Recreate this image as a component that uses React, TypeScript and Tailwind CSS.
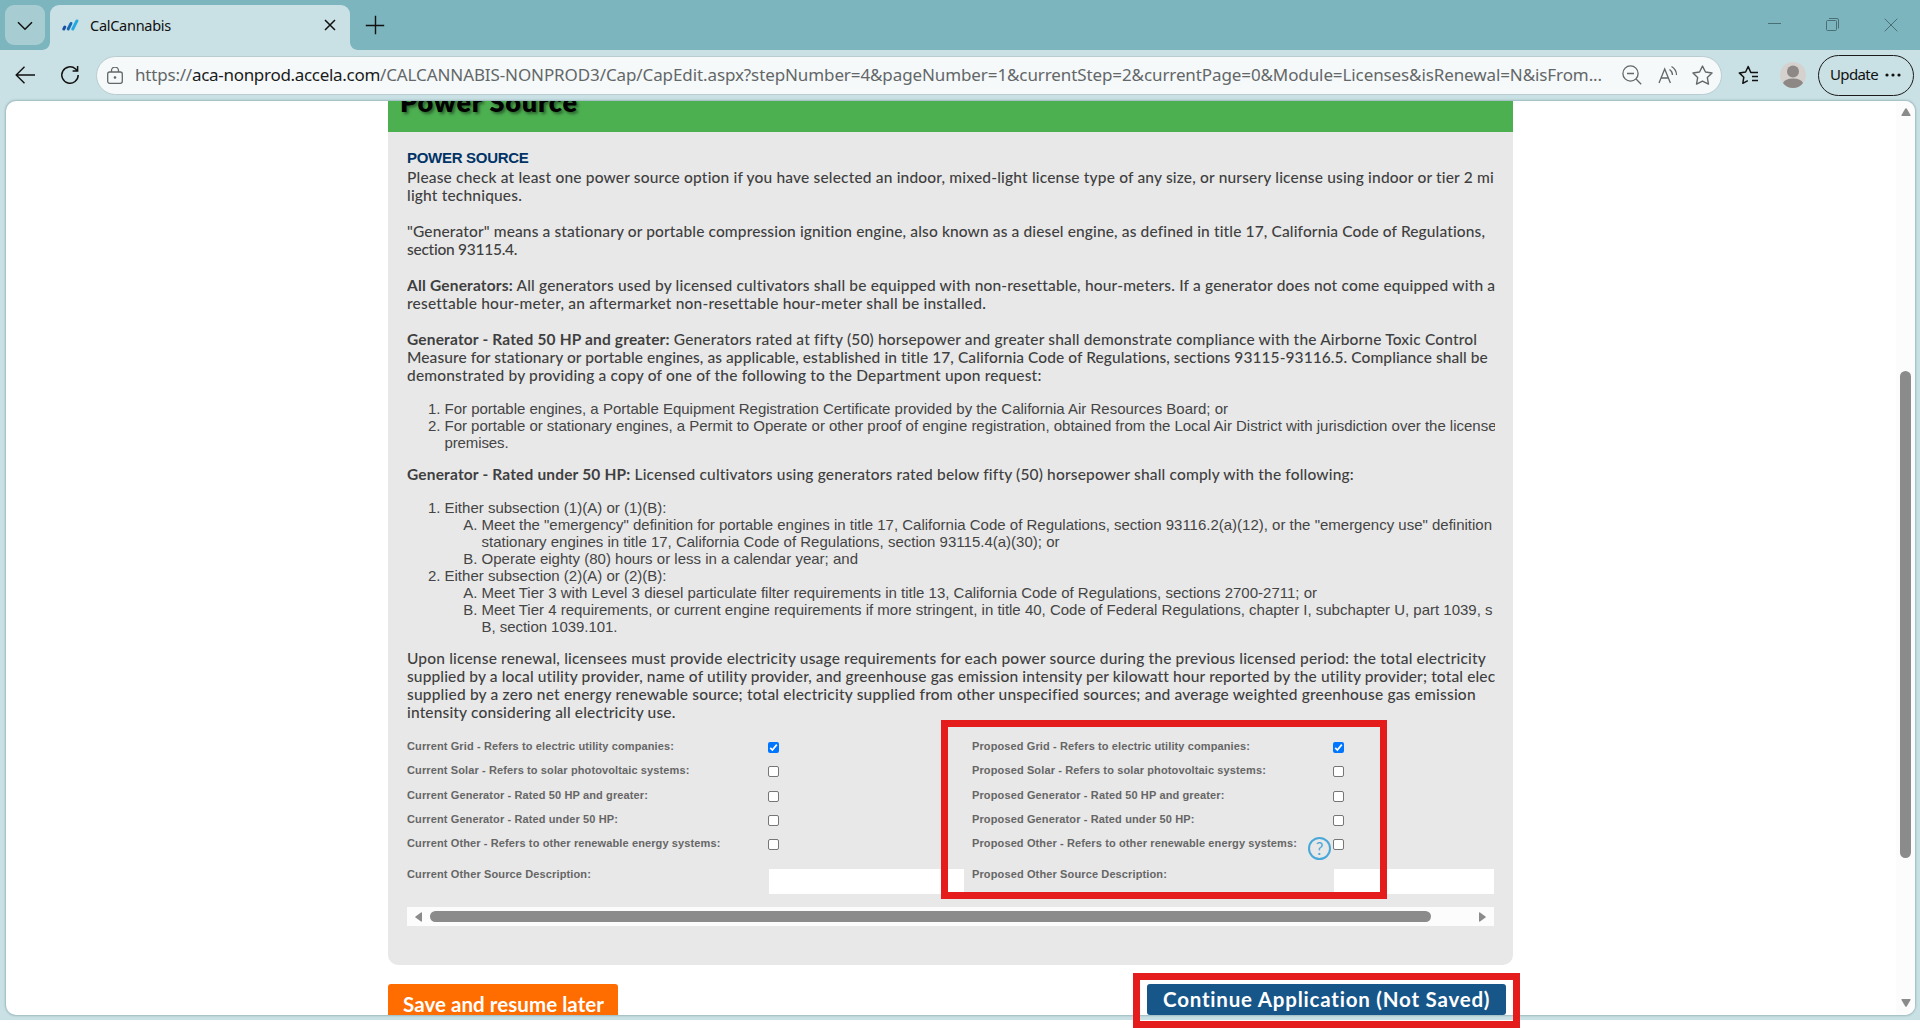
import React, { useLayoutEffect, useRef } from 'react';

// Sets a single line of copy to a fixed measure by adjusting its tracking
const Fit = ({ w, className = '', children }: { w: number; className?: string; children: React.ReactNode }) => {
  const ref = useRef<HTMLSpanElement>(null);

  useLayoutEffect(() => {
    const el = ref.current;
    if (!el) return;
    el.style.letterSpacing = '0px';
    const natural = el.getBoundingClientRect().width;
    const count = (el.textContent || '').length;
    el.style.letterSpacing = `${(w - natural) / count}px`;
  }, [w]);

  return (
    <span ref={ref} className={`inline-block whitespace-pre ${className}`}>
      {children}
    </span>
  );
};

const Line = ({ w, children }: { w: number; children: React.ReactNode }) => (
  <div className="h-[18px] whitespace-nowrap">
    <Fit w={w}>{children}</Fit>
  </div>
);

const Item = ({ mark, w, sub, children }: { mark?: string; w: number; sub?: boolean; children: React.ReactNode }) => (
  <div className={`flex h-[17px] whitespace-nowrap ${sub ? 'pl-[37px]' : ''}`}>
    <span className="w-[37.5px] shrink-0 pr-[4px] text-right">{mark}</span>
    <Fit w={w}>{children}</Fit>
  </div>
);

const Check = ({ checked }: { checked?: boolean }) =>
  checked ? (
    <span className="mt-[4px] flex h-[11px] w-[11px] items-center justify-center rounded-[2px] bg-[#0075ff]">
      <svg viewBox="0 0 11 11" className="h-[11px] w-[11px]" fill="none" stroke="#fff" strokeWidth="1.7">
        <path d="M2.2 5.8 4.4 8 8.8 2.6" />
      </svg>
    </span>
  ) : (
    <span className="mt-[4px] block h-[11px] w-[11px] rounded-[2px] border border-[#767676] bg-white" />
  );

const rows = [
  { height: 'h-[24px]', text: 'Grid - Refers to electric utility companies:', a: 267, b: 278, checked: true },
  { height: 'h-[24.5px]', text: 'Solar - Refers to solar photovoltaic systems:', a: 282.5, b: 294 },
  { height: 'h-[24.5px]', text: 'Generator - Rated 50 HP and greater:', a: 241, b: 252.5 },
  { height: 'h-[24px]', text: 'Generator - Rated under 50 HP:', a: 211, b: 222.5 },
  { height: 'h-[31px]', text: 'Other - Refers to other renewable energy systems:', a: 313.5, b: 325, help: true },
];

const star = 'M10 1.8 12.6 7l5.7.8-4.1 4 1 5.7L10 14.8l-5.2 2.7 1-5.7-4.1-4L7.4 7z';

const TabBar = () => (
  <div className="flex h-[50px] items-start bg-[#7db5be] pt-[5px]">
    <div className="ml-[5px] flex h-[40px] w-[40px] items-center justify-center rounded-[9px] bg-[#a7cdd3]">
      <svg viewBox="0 0 16 10" className="mt-[2px] h-[10px] w-[16px]" fill="none" stroke="#111" strokeWidth="1.5">
        <path d="M1 1.2 8 8.3l7-7.1" />
      </svg>
    </div>
    <div className="relative ml-[5px] flex h-[45px] w-[300px] items-start rounded-t-[9px] bg-[#c9e0e4]">
      <svg viewBox="0 0 8 8" className="absolute -left-[8px] bottom-0 h-[8px] w-[8px]" fill="#c9e0e4">
        <path d="M8 0v8H0c4.4 0 8-3.6 8-8z" />
      </svg>
      <svg viewBox="0 0 8 8" className="absolute -right-[8px] bottom-0 h-[8px] w-[8px]" fill="#c9e0e4">
        <path d="M0 0v8h8C3.6 8 0 4.4 0 0z" />
      </svg>
      <svg viewBox="0 0 17 12" className="ml-[12px] mt-[14px] h-[12px] w-[17px]" fill="none" strokeWidth="2.9" strokeLinecap="round">
        <path d="M1.8 10 2.8 8" stroke="#1b50a0" />
        <path d="M6.2 10 9 4.4" stroke="#1668b8" />
        <path d="M10.8 10 14.9 1.9" stroke="#22a9e0" />
      </svg>
      <span className="ml-[11px] mt-[10px] text-[14.5px] leading-[20px] text-[#111]">
        <Fit w={81}>CalCannabis</Fit>
      </span>
      <svg viewBox="0 0 12 12" className="ml-auto mr-[14px] mt-[14px] h-[12px] w-[12px]" fill="none" stroke="#111" strokeWidth="1.5">
        <path d="m1 1 10 10M11 1 1 11" />
      </svg>
    </div>
    <svg viewBox="0 0 20 20" className="ml-[15px] mt-[10px] h-[20px] w-[20px]" fill="none" stroke="#111" strokeWidth="1.4">
      <path d="M10.5.8v18.4M.8 10.5h18.4" />
    </svg>
    <div className="ml-auto mr-[22px] mt-[12px] flex items-start text-[#4a6f76]">
      <svg viewBox="0 0 13 14" className="mr-[45px] h-[14px] w-[13px]" fill="none" stroke="currentColor">
        <path d="M0 6.5h13" />
      </svg>
      <svg viewBox="0 0 14 14" className="mr-[44px] h-[14px] w-[14px]" fill="none" stroke="currentColor">
        <rect x=".5" y="3.5" width="10" height="10" rx="1" />
        <path d="M3 1.5h8q1.500 0 1.5 1.500v8.5" />
      </svg>
      <svg viewBox="0 0 14 14" className="mt-[1px] h-[14px] w-[14px]" fill="none" stroke="currentColor">
        <path d="m.7.7 12.600 12.600M13.300.7.7 13.300" />
      </svg>
    </div>
  </div>
);

const AddressBar = () => (
  <div className="flex h-[50px] items-center">
    <svg viewBox="0 0 20 18" className="ml-[15px] h-[18px] w-[20px]" fill="none" stroke="#111" strokeWidth="1.4">
      <path d="M9.500.8 1.200 9l8.300 8.200M1.200 9H20" />
    </svg>
    <svg viewBox="0 0 20 20" className="ml-[25px] h-[20px] w-[20px]" fill="none" stroke="#111" strokeWidth="1.5">
      <path d="M18.200 10A8.200 8.200 0 1 1 15.600 4L17.400 5.800M17.600 1v5h-5" />
    </svg>
    <div className="ml-[16px] flex h-[39px] w-[1626px] items-center rounded-full border border-[#b9cdd0] bg-[#f5f9fa] text-[#636768]">
      <svg viewBox="0 0 16 17" className="ml-[10px] h-[17px] w-[16px]" fill="none" stroke="currentColor" strokeWidth="1.3">
        <rect x=".7" y="5" width="14.6" height="11.3" rx="2" />
        <path d="M4.500 5V3.600a3.500 3.500 0 0 1 7 0V5" />
        <circle cx="8" cy="10.5" r=".7" fill="currentColor" />
      </svg>
      <div className="ml-[12px] w-[1490px] text-[17px] leading-[22px]">
        <Fit w={57}>https://</Fit>
        <Fit w={188} className="text-[#1b1b1b]">aca-nonprod.accela.com</Fit>
        <Fit w={1222}>
          /CALCANNABIS-NONPROD3/Cap/CapEdit.aspx?stepNumber=4&amp;pageNumber=1&amp;currentStep=2&amp;currentPage=0&amp;Module=Licenses&amp;isRenewal=N&amp;isFrom...
        </Fit>
      </div>
      <svg viewBox="0 0 20 20" className="-ml-[3px] h-[20px] w-[20px]" fill="none" stroke="currentColor" strokeWidth="1.3">
        <circle cx="8.5" cy="8.5" r="7.6" />
        <path d="m14 14 5.200 5.200M5 8.500h7" />
      </svg>
      <svg viewBox="0 0 20 20" className="ml-[16px] h-[20px] w-[20px]" fill="none" stroke="currentColor" strokeWidth="1.3">
        <path d="M1 18 6.700 4 12.400 18M3 13h7.400M11.500 4.500q3 2 3 5.500M13.500 1.500q5 3 5 8.500" />
      </svg>
      <svg viewBox="0 0 20 20" className="ml-[13px] h-[23px] w-[23px]" fill="none" stroke="currentColor" strokeWidth="1.2" strokeLinejoin="round">
        <path d={star} />
      </svg>
    </div>
    <svg viewBox="0 0 21 20" className="ml-[16px] h-[20px] w-[21px]" fill="none" stroke="#111" strokeWidth="1.5" strokeLinejoin="round">
      <path d="M20 7.500h-7.200L10.200 1.500 7.600 7l-6.300.9 4.500 4.300-1 6.100 5-2.600M14 11.500h6M14 15.500h6" />
    </svg>
    <svg viewBox="0 0 26 26" className="ml-[21px] h-[26px] w-[26px]">
      <circle cx="13" cy="13" r="13" fill="#d5d1ce" />
      <circle cx="13" cy="9.5" r="6" fill="#8d8885" />
      <path d="M3 21q2-4.500 10-4.500T23 21q-3.500 5-10 5T3 21z" fill="#8d8885" />
    </svg>
    <div className="ml-[12px] flex h-[41px] w-[96px] items-center rounded-full border-[1.5px] border-[#1a1a1a] pl-[11px] text-[15px] leading-[20px] text-[#111]">
      <Fit w={48} className="mb-[2px]">Update</Fit>
      <svg viewBox="0 0 16 4" className="ml-[7px] h-[4px] w-[16px]" fill="#111">
        <circle cx="2" cy="2" r="1.6" />
        <circle cx="8" cy="2" r="1.6" />
        <circle cx="14" cy="2" r="1.6" />
      </svg>
    </div>
  </div>
);

const PowerSource = () => (
  <div className="h-[864px] w-[1125px] overflow-hidden rounded-b-[10px] bg-[#e8e8e8]">
    <div className="flex h-[31px] items-start overflow-hidden bg-[#4caf50] pl-[12px] font-['Lato'] text-[27px] font-extrabold leading-[32px] text-black">
      <Fit w={178} className="-mt-[15px] [text-shadow:2px_2px_3px_rgba(0,0,0,0.45)]">Power Source</Fit>
    </div>

    <div className="ml-[19px] w-[1088px] overflow-hidden pt-[17px] font-['Lato'] text-[15.5px] font-medium leading-[18px] text-[#3f3f3f]">
      <div className="h-[19px] font-['Liberation_Sans'] text-[15px] font-bold text-[#003366]">
        <Fit w={121.5}>POWER SOURCE</Fit>
      </div>
      <Line w={1087.5}>Please check at least one power source option if you have selected an indoor, mixed-light license type of any size, or nursery license using indoor or tier 2 mi</Line>
      <Line w={115}>light techniques.</Line>
      <div className="mt-[18px]">
        <Line w={1079}>"Generator" means a stationary or portable compression ignition engine, also known as a diesel engine, as defined in title 17, California Code of Regulations,</Line>
        <Line w={110.5}>section 93115.4.</Line>
      </div>
      <div className="mt-[18px]">
        <Line w={1088}>
          <b className="font-bold">All Generators:</b> All generators used by licensed cultivators shall be equipped with non-resettable, hour-meters. If a generator does not come equipped with a
        </Line>
        <Line w={577.5}>resettable hour-meter, an aftermarket non-resettable hour-meter shall be installed.</Line>
      </div>
      <div className="mt-[18px]">
        <Line w={1069.5}>
          <b className="font-bold">Generator - Rated 50 HP and greater:</b> Generators rated at fifty (50) horsepower and greater shall demonstrate compliance with the Airborne Toxic Control
        </Line>
        <Line w={1082}>Measure for stationary or portable engines, as applicable, established in title 17, California Code of Regulations, sections 93115-93116.5. Compliance shall be</Line>
        <Line w={634.5}>demonstrated by providing a copy of one of the following to the Department upon request:</Line>
      </div>

      <div className="mt-[16px] font-['Liberation_Sans'] text-[15px] font-normal leading-[17px] text-[#444]">
        <Item mark="1." w={783.5}>For portable engines, a Portable Equipment Registration Certificate provided by the California Air Resources Board; or</Item>
        <Item mark="2." w={1052}>For portable or stationary engines, a Permit to Operate or other proof of engine registration, obtained from the Local Air District with jurisdiction over the license</Item>
        <Item w={64}>premises.</Item>
      </div>

      <div className="mt-[14px]">
        <Line w={946.5}>
          <b className="font-bold">Generator - Rated under 50 HP:</b> Licensed cultivators using generators rated below fifty (50) horsepower shall comply with the following:
        </Line>
      </div>

      <div className="mt-[16px] font-['Liberation_Sans'] text-[15px] font-normal leading-[17px] text-[#444]">
        <Item mark="1." w={222}>Either subsection (1)(A) or (1)(B):</Item>
        <Item sub mark="A." w={1010.5}>Meet the "emergency" definition for portable engines in title 17, California Code of Regulations, section 93116.2(a)(12), or the "emergency use" definition</Item>
        <Item sub w={578}>stationary engines in title 17, California Code of Regulations, section 93115.4(a)(30); or</Item>
        <Item sub mark="B." w={376.5}>Operate eighty (80) hours or less in a calendar year; and</Item>
        <Item mark="2." w={222}>Either subsection (2)(A) or (2)(B):</Item>
        <Item sub mark="A." w={835.5}>Meet Tier 3 with Level 3 diesel particulate filter requirements in title 13, California Code of Regulations, sections 2700-2711; or</Item>
        <Item sub mark="B." w={1011}>Meet Tier 4 requirements, or current engine requirements if more stringent, in title 40, Code of Federal Regulations, chapter I, subchapter U, part 1039, s</Item>
        <Item sub w={136}>B, section 1039.101.</Item>
      </div>

      <div className="mt-[14px]">
        <Line w={1079}>Upon license renewal, licensees must provide electricity usage requirements for each power source during the previous licensed period: the total electricity</Line>
        <Line w={1088.5}>supplied by a local utility provider, name of utility provider, and greenhouse gas emission intensity per kilowatt hour reported by the utility provider; total elec</Line>
        <Line w={1068.5}>supplied by a zero net energy renewable source; total electricity supplied from other unspecified sources; and average weighted greenhouse gas emission</Line>
        <Line w={268.5}>intensity considering all electricity use.</Line>
      </div>

      <div className="mt-[17px] w-[1087px] font-['Liberation_Sans'] text-[11px] font-bold leading-[16px] text-[#666]">
        {rows.map((row) => (
          <div key={row.text} className={`flex items-start ${row.height}`}>
            <div className="w-[361px]"><Fit w={row.a}>{`Current ${row.text}`}</Fit></div>
            <div className="w-[204px]"><Check checked={row.checked} /></div>
            <div className="relative w-[361px]">
              <Fit w={row.b}>{`Proposed ${row.text}`}</Fit>
              {row.help && (
                <span className="absolute left-[336px] top-[2px] flex h-[23px] w-[23px] items-center justify-center rounded-full border-[2px] border-[#4aa8d8] font-['Lato'] text-[17px] font-normal text-[#4aa8d8]">
                  ?
                </span>
              )}
            </div>
            <Check checked={row.checked} />
          </div>
        ))}
        <div className="flex h-[28px] items-start">
          <div className="w-[362px]"><Fit w={184}>Current Other Source Description:</Fit></div>
          <div className="mt-[3px] h-[25px] w-[195px] bg-white" />
          <div className="ml-[8px] w-[362px]"><Fit w={195}>Proposed Other Source Description:</Fit></div>
          <div className="mt-[3px] h-[25px] w-[160px] bg-white" />
        </div>
      </div>

      <div className="mt-[13px] flex h-[19px] w-[1087px] items-center bg-[#fcfcfc] pl-[8px] pr-[8px]">
        <svg viewBox="0 0 7 10" className="h-[10px] w-[7px]" fill="#8b8b8b"><path d="M7 1v8q0 1-1 .500L.5 5.500Q0 5 .5 4.500L6 .5Q7 0 7 1z" /></svg>
        <div className="ml-[8px] h-[11px] w-[1001px] rounded-full bg-[#8b8b8b]" />
        <svg viewBox="0 0 7 10" className="ml-auto h-[10px] w-[7px]" fill="#8b8b8b"><path d="M0 1v8q0 1 1 .500L6.500 5.500Q7 5 6.500 4.500L1 .5Q0 0 0 1z" /></svg>
      </div>
    </div>
  </div>
);

const App = () => {
  return (
    <div className="relative h-[1028px] w-[1920px] overflow-hidden bg-white font-['Noto_Sans']">
      <div className="h-[1020px] bg-[#c9e0e4]">
        <TabBar />
        <AddressBar />
        <div className="ml-[6px] mt-[1px] flex h-[914px] w-[1909px] overflow-hidden rounded-[10px] bg-white shadow-[0_0_2px_1px_#9dbabf]">
          <div className="ml-[382px]">
            <PowerSource />
            <div className="mt-[19px] flex h-[31px] w-[1118px] items-start justify-between font-['Lato'] text-[20.5px] font-bold text-white">
              <div className="h-[40px] w-[230px] rounded-[3px] bg-[#ff6c00] pl-[15px] pt-[6px] leading-[28px]">
                <Fit w={201}>Save and resume later</Fit>
              </div>
              <div className="h-[31px] w-[359px] rounded-[3px] bg-[#175689] pl-[16px] pt-[1px] leading-[28px]">
                <Fit w={328}>Continue Application (Not Saved)</Fit>
              </div>
            </div>
          </div>
          <div className="ml-auto flex w-[19px] flex-col items-center bg-[#fcfcfc] pt-[7px]">
            <svg viewBox="0 0 10 8" className="h-[8px] w-[10px]" fill="#8b8b8b"><path d="M1 8h8q1 0 .500-1L5.700.6Q5 0 4.300.6L.5 7Q0 8 1 8z" /></svg>
            <div className="mt-[255px] h-[487px] w-[11px] rounded-full bg-[#8b8b8b]" />
            <svg viewBox="0 0 10 8" className="mt-auto mb-[8px] h-[8px] w-[10px]" fill="#8b8b8b"><path d="M1 0h8q1 0 .500 1L5.700 7.400Q5 8 4.300 7.400L.5 1Q0 0 1 0z" /></svg>
          </div>
        </div>
      </div>

      {/* red callouts */}
      <div className="absolute left-[941px] top-[720px] h-[179px] w-[446px] border-[7px] border-[#e51c1c]" />
      <div className="absolute left-[1133px] top-[973px] h-[55px] w-[387px] border-[7px] border-[#e51c1c]" />
    </div>
  );
};

export default App;
